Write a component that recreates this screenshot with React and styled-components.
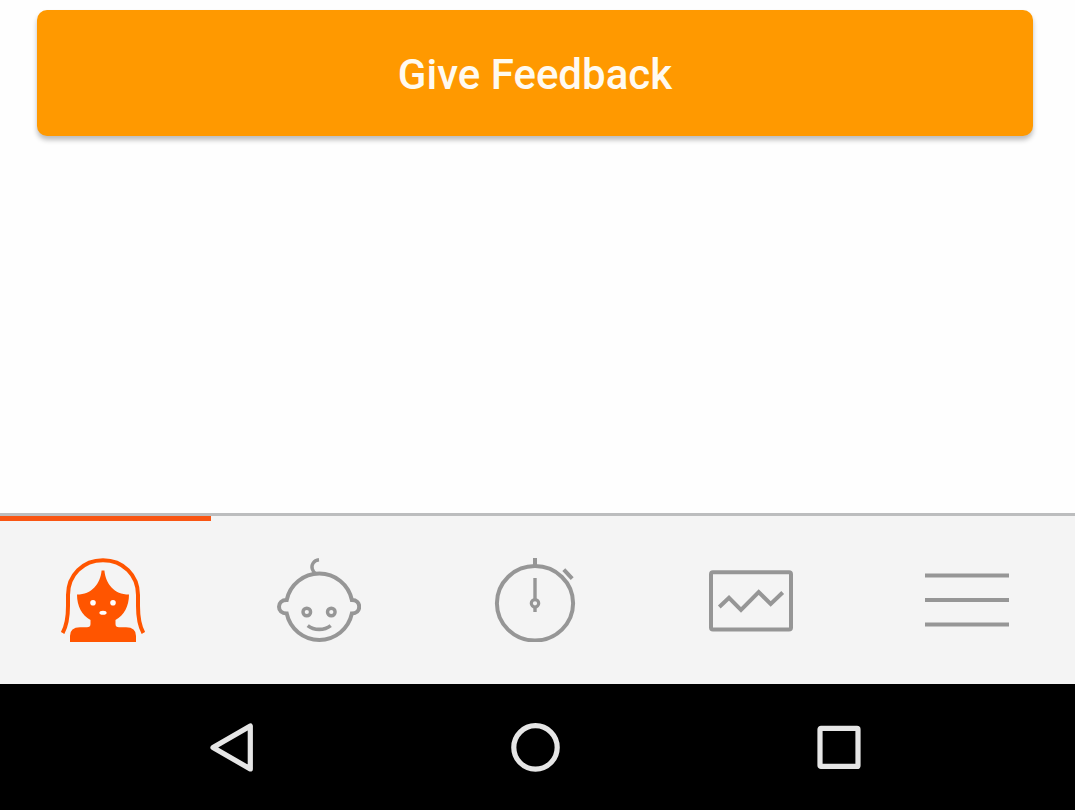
import React from "react";
import styled, { createGlobalStyle } from "styled-components";

const GlobalStyle = createGlobalStyle`
  *, *::before, *::after { box-sizing: border-box; }
  body {
    margin: 0;
    background: #fefefe;
    font-family: Roboto, "Liberation Sans", sans-serif;
  }
`;

const Screen = styled.div`
  display: flex;
  flex-direction: column;
  min-height: 100vh;
`;

const Content = styled.main`
  flex: 1;
  padding: 10px 42px 24px 37px;
`;

const FeedbackButton = styled.button`
  display: block;
  width: 100%;
  padding: 40px 24px 36px;
  border: 0;
  border-radius: 10px;
  background: #ff9900;
  box-shadow: 0 4px 5px rgba(0, 0, 0, 0.26);
  color: #fffaf0;
  font-family: inherit;
  font-size: 42px;
  font-weight: 500;
  line-height: 50px;
  cursor: pointer;
`;

const TabBar = styled.nav`
  position: relative;
  display: flex;
  justify-content: space-between;
  padding: 0 66px 0 61px;
  border-top: 3px solid #bcbdbe;
  background: #f4f4f4;

  &::before {
    content: "";
    position: absolute;
    top: 0;
    left: 0;
    width: 211px;
    height: 5px;
    background: #f95512;
  }
`;

const TabButton = styled.button`
  padding: 42px 0;
  border: 0;
  background: none;
  color: ${({ $active }) => ($active ? "#ff5500" : "#969696")};
  cursor: pointer;
`;

const TabIcon = styled.svg`
  display: block;
  width: 84px;
  height: 84px;
  fill: none;
  stroke: currentColor;
  stroke-width: 4;
`;

const SystemBar = styled.nav`
  display: flex;
  justify-content: space-between;
  padding: 0 192px 0 188px;
  background: #000;
`;

const SystemButton = styled.button`
  padding: 39px 20px;
  border: 0;
  background: none;
  color: #e6e6e6;
  cursor: pointer;
`;

const SystemIcon = styled.svg`
  display: block;
  width: 48px;
  height: 48px;
  overflow: visible;
  fill: none;
  stroke: currentColor;
  stroke-width: 5.2;
  stroke-linejoin: round;
`;

const tabs = [
  {
    label: "Mother",
    active: true,
    icon: (
      <>
        <path d="M1.6 75C6 67 7 60 7 48V37C7 17 22 2.2 42 2.2S77 17 77 37V48C77 60 78 67 82.4 75" />
        <path
          fill="currentColor"
          stroke="none"
          d="M40.6 12.5H43.4C44.8 26 53 36.5 68 36.5C68 48 63 57.5 54.5 62V66Q54.5 69.3 58 69.3H65Q75 69.3 75 78V84H9V78Q9 69.3 19 69.3H26Q29.5 69.3 29.5 66V62C21 57.5 16 48 16 36.5C31 36.5 39.2 26 40.6 12.5Z"
        />
        <g fill="#fff" stroke="none">
          <circle cx="32" cy="44.7" r="2.8" />
          <circle cx="52" cy="44.7" r="2.8" />
          <ellipse cx="42" cy="54.7" rx="3.6" ry="2" />
        </g>
      </>
    ),
  },
  {
    label: "Baby",
    icon: (
      <>
        <path d="M9.7 42A33.3 33.3 0 0 1 74.9 42C79.5 42 82.2 44.8 82.2 48.7S79.5 55.4 74.9 55.4A33.3 33.3 0 0 1 9.7 55.4C4.8 55.4 2 52.6 2 48.7S4.8 42 9.7 42Z" />
        <path strokeWidth="3.4" d="M42 1.8C36.5 2.4 34 7 35.3 11Q36.2 14 38.6 15.5" />
        <circle cx="29.8" cy="54" r="3.8" strokeWidth="3.4" />
        <circle cx="54.3" cy="54" r="3.8" strokeWidth="3.4" />
        <path strokeWidth="3.6" d="M30.7 67.6Q35.5 71.4 42.2 71.4T53.7 67.6" />
      </>
    ),
  },
  {
    label: "Timer",
    icon: (
      <>
        <ellipse cx="42" cy="45.3" rx="38.1" ry="37.2" />
        <path d="M42 0V8M70.8 11.6L79.2 20.6" />
        <path strokeWidth="3.4" d="M42 20V42M42 49V54" />
        <circle cx="42" cy="45.3" r="3.7" strokeWidth="3.2" />
      </>
    ),
  },
  {
    label: "Charts",
    icon: (
      <>
        <rect x="2" y="14.2" width="80" height="57.4" rx="2" />
        <path d="M10.3 49L20 39.8L32 51.8L49.7 34L61.7 46L73.7 34.5" />
      </>
    ),
  },
  {
    label: "Menu",
    icon: <path d="M0 17.6H84M0 42H84M0 66.4H84" />,
  },
];

const systemActions = [
  { label: "Back", icon: <path d="M5 24.5L42.3 3V46Z" /> },
  { label: "Home", icon: <circle cx="23.5" cy="24.4" r="21.7" /> },
  { label: "Recent apps", icon: <rect x="5" y="5.4" width="38" height="38" rx="1" /> },
];

export default function App() {
  return (
    <Screen>
      <GlobalStyle />
      <Content>
        <FeedbackButton type="button">Give Feedback</FeedbackButton>
      </Content>
      <TabBar aria-label="Sections">
        {tabs.map(({ label, active, icon }) => (
          <TabButton
            key={label}
            type="button"
            aria-label={label}
            aria-current={active ? "page" : undefined}
            $active={active}
          >
            <TabIcon viewBox="0 0 84 84" aria-hidden="true">
              {icon}
            </TabIcon>
          </TabButton>
        ))}
      </TabBar>
      <SystemBar aria-label="System">
        {systemActions.map(({ label, icon }) => (
          <SystemButton key={label} type="button" aria-label={label}>
            <SystemIcon viewBox="0 0 48 48" aria-hidden="true">
              {icon}
            </SystemIcon>
          </SystemButton>
        ))}
      </SystemBar>
    </Screen>
  );
}
